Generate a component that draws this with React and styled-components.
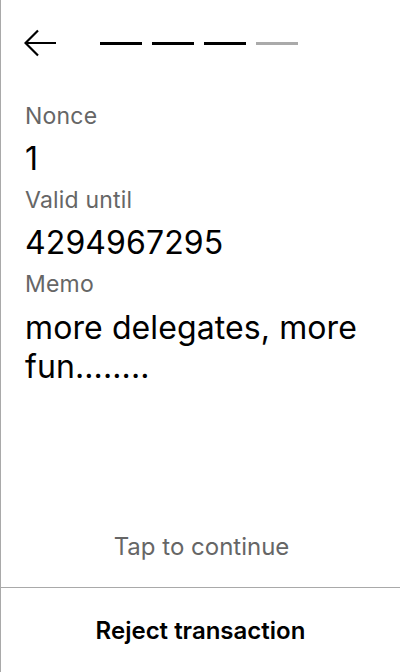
import React from "react";
import styled, { createGlobalStyle } from "styled-components";

const Global = createGlobalStyle`
  html, body { margin: 0; padding: 0; background: #fff; }
  body { font-family: Inter, "Noto Sans", sans-serif; -webkit-font-smoothing: antialiased; }
`;

const Screen = styled.div`
  width: 400px;
  height: 672px;
  box-sizing: border-box;
  border-left: 1px solid #a9a9a9;
  display: flex;
  flex-direction: column;
  background: #fff;
`;

const Header = styled.div`
  display: flex;
  align-items: center;
  height: 58px;
  padding: 28px 0 0 23px;
  box-sizing: border-box;
`;

const BackButton = styled.button`
  border: 0;
  background: none;
  padding: 0;
  width: 34px;
  height: 28px;
  display: flex;
  align-items: center;
  cursor: pointer;
`;

const Steps = styled.div`
  display: flex;
  gap: 10px;
  margin-left: 42px;
`;

const Step = styled.div`
  width: 42px;
  height: 3px;
  background: ${(p) => (p.$done ? "#000" : "#aaaaaa")};
`;

const Content = styled.div`
  flex: 1;
  display: flex;
  flex-direction: column;
  padding: 44px 16px 0 24px;
`;

const Label = styled.div`
  font-size: 23px;
  line-height: 28px;
  letter-spacing: 0.2px;
  color: #666;
  margin-bottom: 10px;
`;

const Value = styled.div`
  font-size: 32px;
  line-height: ${(p) => (p.$memo ? "39px" : "37px")};
  letter-spacing: 0.1px;
  color: #000;
  margin-bottom: ${(p) => (p.$memo ? "0" : "9px")};
`;

const Spacer = styled.div`
  flex: 1;
`;

const Hint = styled.div`
  text-align: center;
  font-size: 24px;
  line-height: 28px;
  color: #666;
  margin-bottom: 26px;
  padding-right: 6px;
`;

const Footer = styled.div`
  border-top: 1px solid #a9a9a9;
  height: 84px;
  display: flex;
  align-items: center;
  justify-content: center;
`;

const Reject = styled.button`
  border: 0;
  background: none;
  font-family: Inter, "Noto Sans", sans-serif;
  font-size: 24px;
  font-weight: 600;
  color: #000;
  padding: 0;
  cursor: pointer;
`;

const Arrow = () => (
  <svg width="34" height="28" viewBox="0 0 34 28" fill="none">
    <path d="M32 14H2M14 1.5L1.5 14L14 26.5" stroke="#000" strokeWidth="2.2" />
  </svg>
);

export default function App() {
  return (
    <>
      <Global />
      <Screen>
        <Header>
          <BackButton aria-label="Back">
            <Arrow />
          </BackButton>
          <Steps>
            <Step $done />
            <Step $done />
            <Step $done />
            <Step />
          </Steps>
        </Header>
        <Content>
          <Label>Nonce</Label>
          <Value>1</Value>
          <Label>Valid until</Label>
          <Value>4294967295</Value>
          <Label>Memo</Label>
          <Value $memo>more delegates, more fun........</Value>
          <Spacer />
          <Hint>Tap to continue</Hint>
        </Content>
        <Footer>
          <Reject>Reject transaction</Reject>
        </Footer>
      </Screen>
    </>
  );
}
